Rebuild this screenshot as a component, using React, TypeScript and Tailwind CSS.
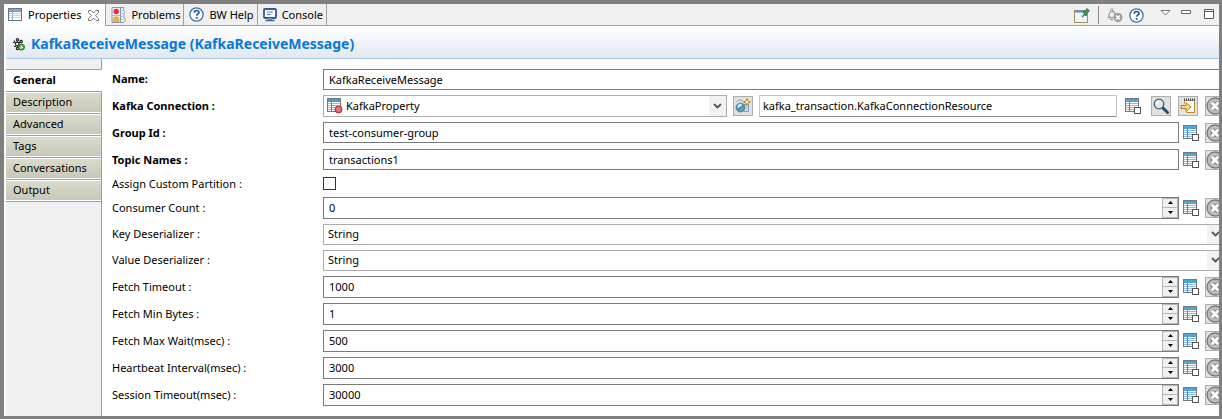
import { useState } from 'react';
import type { ReactNode } from 'react';

const sections = ['General', 'Description', 'Advanced', 'Tags', 'Conversations', 'Output'];

function TableIcon() {
  return (
    <svg width="16" height="16" viewBox="0 0 16 16" className="shrink-0" shapeRendering="crispEdges">
      <rect x="0.5" y="0.5" width="13" height="13" fill="#fff" stroke="#6f7a86" />
      <rect x="1" y="1" width="12" height="3" fill="#4fa3dc" />
      <path d="M1 5.5h12M1 7.5h12M1 9.5h12M1 11.5h12" stroke="#8fbcdc" />
      <path d="M4.5 4v9" stroke="#6f7a86" />
      <rect x="9.5" y="9.5" width="6" height="6" fill="#fff" stroke="#555" />
    </svg>
  );
}

function PropertiesIcon() {
  return (
    <svg width="15" height="14" viewBox="0 0 15 14" className="shrink-0" shapeRendering="crispEdges">
      <rect x="0.5" y="0.5" width="13" height="12" fill="#fff" stroke="#64748f" />
      <rect x="1" y="1" width="12" height="2" fill="#8ba5cb" />
      <path d="M1 3.5h12M4.5 1v11" stroke="#8696b0" />
      <path d="M1 5.5h12M1 7.5h12M1 9.5h12" stroke="#c6d3e6" />
    </svg>
  );
}

function ProblemsIcon() {
  return (
    <svg width="15" height="16" viewBox="0 0 15 16" className="shrink-0">
      <path d="M1 .5h12c-2 2 1.500 3 .5 6-.5 2-1.500 3 0 4.500 1 1.500 1 3.500-.5 4.500H1z" fill="#f4efe2" stroke="#8b98ac" />
      <path d="M9.500 1v14" stroke="#6f93c0" />
      <path d="M9.500 3.500h3M9.500 6.500h3M9.500 9.500h3M9.500 12.500h3" stroke="#b4c6dd" />
      <path d="M1 8.500h8" stroke="#b4bbc5" />
      <circle cx="5.200" cy="4.500" r="2.700" fill="#d9343d" />
      <path d="M2.500 14.500V12c0-3 5.400-3 5.400 0v2.500z" fill="#f0b440" stroke="#d99428" strokeWidth=".6" />
    </svg>
  );
}

function HelpIcon() {
  return (
    <svg width="15" height="15" viewBox="0 0 15 15" className="shrink-0" fill="none">
      <circle cx="7.500" cy="7.500" r="6.600" fill="#fff" stroke="#3b76a8" strokeWidth="1.300" />
      <path d="M5.200 5.800c0-3 4.800-3 4.800-.3 0 1.600-2.300 1.500-2.300 3.300" stroke="#225f97" strokeWidth="1.700" />
      <rect x="6.800" y="10" width="1.800" height="1.800" fill="#225f97" />
    </svg>
  );
}

function ConsoleIcon() {
  return (
    <svg width="14" height="14" viewBox="0 0 14 14" className="shrink-0">
      <rect x="1" y="1" width="12" height="9" rx="1" fill="#fff" stroke="#2c5a9e" strokeWidth="1.800" />
      <path d="M4 4h6M4 6.500h4" stroke="#4b76b3" />
      <path d="M5 10h4v2H5z" fill="#7795bd" />
      <path d="M2.500 12.500h9" stroke="#38639f" strokeWidth="1.500" />
    </svg>
  );
}

function CloseIcon() {
  return (
    <svg width="11" height="11" viewBox="0 0 11 11" fill="#fff" stroke="#6d6d6d">
      <path d="M.5.500h2.500l2.500 2.500L8 .5h2.500v2L7.500 5.500l3 3v2H8L5.500 8 3 10.500H.5v-2l3-3-3-3z" strokeWidth=".9" />
    </svg>
  );
}

function KafkaIcon() {
  return (
    <svg width="12" height="13" viewBox="0 0 12 13" className="shrink-0" fill="none">
      <g stroke="#222" strokeWidth="1.200">
        <circle cx="4.500" cy="1.800" r="1.200" />
        <circle cx="4.200" cy="6" r="1.800" />
        <circle cx="4.500" cy="10.500" r="1.200" />
        <circle cx="8.200" cy="3.600" r="1.200" />
        <path d="M4.500 3v1M4.500 8v1.300M6 5l1.300-.7M0 4.500h2M1.500 2.500v2M1 8.500h2" />
      </g>
      <circle cx="8.500" cy="9.200" r="3" fill="#5cae35" stroke="#2c7418" />
      <path d="M7.600 7.500 10.300 9.200 7.600 10.900z" fill="#fff" />
    </svg>
  );
}

function PinIcon() {
  return (
    <svg width="16" height="15" viewBox="0 0 16 15">
      <rect x=".5" y="2.500" width="13" height="12" fill="#eef6fb" stroke="#a39163" />
      <path d="M1 3.500h12" stroke="#4c93d0" strokeWidth="2" />
      <path d="m8 9 3-3" stroke="#555" strokeWidth="1.200" />
      <path d="m9 4 2-1 2-2.500L15.500 3 13 5l-1 3z" fill="#36a14a" stroke="#1b7233" strokeWidth=".8" />
    </svg>
  );
}

function BellOffIcon() {
  return (
    <svg width="16" height="15" viewBox="0 0 16 15" fill="none">
      <circle cx="4.800" cy="2" r="1.300" stroke="#a2a2a2" />
      <path d="M2 9c0-4 .5-5.500 3-5.500S8 5 8 7M.5 9.500h6M3 11.500h3" stroke="#a2a2a2" strokeWidth="1.400" />
      <circle cx="11" cy="9.500" r="4.500" fill="#9a9a9a" />
      <path d="m9 7.500 4 4m0-4-4 4" stroke="#fff" strokeWidth="1.600" />
    </svg>
  );
}

function ClearIcon() {
  return (
    <svg width="18" height="18" viewBox="0 0 18 18" className="shrink-0">
      <circle cx="9" cy="9" r="8" fill="#bdbdbd" stroke="#777" strokeWidth="1.300" />
      <path d="m5.800 5.800 6.400 6.400m0-6.400-6.400 6.400" stroke="#777" strokeWidth="4.600" />
      <path d="m5.800 5.800 6.400 6.400m0-6.400-6.400 6.400" stroke="#fff" strokeWidth="3" />
    </svg>
  );
}

function PropertyIcon() {
  return (
    <svg width="16" height="16" viewBox="0 0 16 16">
      <rect x=".5" y=".5" width="13" height="13" fill="#fff" stroke="#6f7a86" />
      <path d="M1 2.500h12" stroke="#4f9bd0" strokeWidth="3" />
      <path d="M1 5.500h12M1 7.500h12M1 9.500h12M1 11.500h12" stroke="#9cbfd8" />
      <path d="M4.500 4v9" stroke="#6f7a86" />
      <circle cx="11.500" cy="11.500" r="3.500" fill="#d4595c" stroke="#a43338" />
      <circle cx="11.500" cy="11.500" r="1.500" fill="none" stroke="#efa3a3" />
    </svg>
  );
}

function NewResourceIcon() {
  return (
    <svg width="16" height="16" viewBox="0 0 16 16" fill="none">
      <path d="M1.500 4c2-3 5-2 7-1" stroke="#999" />
      <path d="M8.500 6.500h5v7h-5z" fill="#c4d6f2" stroke="#7d9ccb" />
      <circle cx="5.500" cy="9.500" r="4.500" fill="#4d92bb" stroke="#6a8295" />
      <path d="M2.500 7.500c2-2.500 4-2 4.500-.5s-2 1-3 2.500-1.500 0-1.500-2z" fill="#cdeaf1" />
      <path d="M5 12.500c0-2 3-3 3.500-2s-1.500 3-3.500 2z" fill="#6ab06c" />
      <path d="m12 .5 1 2.500 2.500 1-2.500 1-1 2.500L11 5 8.500 4 11 3z" fill="#fff3b5" stroke="#bd8a27" />
    </svg>
  );
}

function SearchIcon() {
  return (
    <svg width="16" height="16" viewBox="0 0 16 16">
      <path d="m10 10 4.500 4.500" stroke="#1d4d75" strokeWidth="3" strokeLinecap="round" />
      <circle cx="6" cy="6" r="4.800" fill="#dcebf0" stroke="#4c5c68" strokeWidth="1.300" />
      <path d="M3.500 6c0-1.500 1-2.500 2.500-2.500" stroke="#fff" fill="none" strokeWidth="1.300" />
    </svg>
  );
}

function GoToIcon() {
  return (
    <svg width="16" height="16" viewBox="0 0 16 16">
      <path d="M4.500 2.500h10v12h-8" fill="#fff" stroke="#b88a2c" />
      <path d="M4.500 2.500v3" stroke="#b88a2c" />
      <path d="M4 1.500h11" stroke="#333f66" strokeWidth="2" strokeDasharray="1 1" />
      <path d="M1 7.500h5V4.500L11 9l-5 4.500v-3H1z" fill="#fbdc7b" stroke="#b57a17" />
    </svg>
  );
}

function IconButton({ label, children }: { label: string; children: ReactNode }) {
  return (
    <button
      aria-label={label}
      className="flex size-5 shrink-0 items-center justify-center border border-[#adadad] bg-[#e1e1e1]"
    >
      {children}
    </button>
  );
}

function Chevron() {
  return (
    <span className="pointer-events-none absolute inset-y-px right-px flex w-[17px] items-center justify-center bg-[#f2f2f2]">
      <svg width="9" height="6" viewBox="0 0 9 6" fill="none" stroke="#555" strokeWidth="1.800">
        <path d="m1 1 3.500 3.500L8 1" />
      </svg>
    </span>
  );
}

// trailing "use module property" icon and clear button
function FieldActions() {
  return (
    <>
      <span className="ml-1">
        <TableIcon />
      </span>
      <span className="ml-1.5 flex">
        <IconButton label="Clear">
          <ClearIcon />
        </IconButton>
      </span>
    </>
  );
}

function Row({ id, label, bold, height = 'h-[27px]', children }: {
  id: string;
  label: string;
  bold?: boolean;
  height?: string;
  children: ReactNode;
}) {
  return (
    <div className={`flex items-center ${height}`}>
      <label htmlFor={id} className={`w-[211px] shrink-0 whitespace-nowrap ${bold ? 'font-bold' : ''}`}>
        {label}
      </label>
      {children}
    </div>
  );
}

function TextRow({ id, label, value }: { id: string; label: string; value: string }) {
  return (
    <Row id={id} label={label} bold>
      <input id={id} defaultValue={value} className="h-[21px] min-w-0 flex-1 border border-[#7a7a7a] bg-white px-[5px]" />
      <FieldActions />
    </Row>
  );
}

function SpinnerRow({ id, label, initial }: { id: string; label: string; initial: number }) {
  const [value, setValue] = useState(initial);

  return (
    <Row id={id} label={label}>
      <div className="flex h-[22px] min-w-0 flex-1 border border-[#7a7a7a] bg-white">
        <input
          id={id}
          value={value}
          onChange={(e) => setValue(Number(e.target.value) || 0)}
          className="min-w-0 flex-1 px-[5px] outline-none"
        />
        <div className="flex w-4 flex-col border border-[#b5b5b5] bg-[#b5b5b5]">
          <button
            aria-label={`Increase ${label}`}
            onClick={() => setValue(value + 1)}
            className="flex flex-1 items-center justify-center border-b border-[#b5b5b5] bg-[#f0f0f0]"
          >
            <svg width="5" height="3" viewBox="0 0 5 3"><path d="M0 3 2.500 0 5 3z" /></svg>
          </button>
          <button
            aria-label={`Decrease ${label}`}
            onClick={() => setValue(Math.max(0, value - 1))}
            className="flex flex-1 items-center justify-center bg-[#f0f0f0]"
          >
            <svg width="5" height="3" viewBox="0 0 5 3"><path d="M0 0h5L2.500 3z" /></svg>
          </button>
        </div>
      </div>
      <FieldActions />
    </Row>
  );
}

function SelectRow({ id, label }: { id: string; label: string }) {
  return (
    <Row id={id} label={label} height="h-[26px]">
      <div className="relative flex min-w-0 flex-1">
        <select id={id} className="h-[21px] w-full appearance-none border border-[#adadad] bg-white px-1">
          <option>String</option>
          <option>Integer</option>
          <option>ByteArray</option>
        </select>
        <Chevron />
      </div>
    </Row>
  );
}

function ViewTab({ active, icon, label, children }: {
  active?: boolean;
  icon: ReactNode;
  label: string;
  children?: ReactNode;
}) {
  return (
    <div className={`flex items-center border-r border-[#a0a0a0] ${active ? 'bg-white pr-1.5 pl-1' : '-mb-px h-[22px] border-b pr-[3px] pl-[5px]'}`}>
      <button className="flex items-center gap-[5px] whitespace-nowrap">
        {icon}
        {label}
      </button>
      {children}
    </div>
  );
}

function TabBar() {
  return (
    <div className="flex h-[22px] bg-[#f0f0f0] shadow-[inset_0_-1px_0_#a0a0a0]">
      <ViewTab active icon={<PropertiesIcon />} label="Properties">
        <button aria-label="Close Properties" className="ml-[7px]">
          <CloseIcon />
        </button>
      </ViewTab>
      <ViewTab icon={<ProblemsIcon />} label="Problems" />
      <ViewTab icon={<HelpIcon />} label="BW Help" />
      <ViewTab icon={<ConsoleIcon />} label="Console" />
      <div className="ml-auto flex items-center pr-[5px]">
        <button aria-label="Pin view"><PinIcon /></button>
        <span className="mx-2 h-[18px] w-px bg-[#8d8d8d]" />
        <button aria-label="Mute"><BellOffIcon /></button>
        <button aria-label="Help" className="ml-1.5"><HelpIcon /></button>
        <button aria-label="View menu" className="mb-1 ml-4">
          <svg width="11" height="6" viewBox="0 0 11 6" fill="#fff" stroke="#777"><path d="M1 .5h9L5.500 5z" /></svg>
        </button>
        <button aria-label="Minimize" className="mb-1.5 ml-[10px]">
          <svg width="10" height="4" viewBox="0 0 10 4" fill="#fff" stroke="#666"><path d="M.5.500h9v3h-9z" /></svg>
        </button>
        <button aria-label="Maximize" className="mb-0.5 ml-[13px]">
          <svg width="10" height="10" viewBox="0 0 10 10" fill="#fff" stroke="#555"><path d="M.5.500h9v9h-9zM.5 2.500h9" /></svg>
        </button>
      </div>
    </div>
  );
}

function Sidebar({ current, onSelect }: { current: string; onSelect: (s: string) => void }) {
  return (
    <nav className="flex w-24 shrink-0 flex-col bg-[#f0f0f0]">
      <div className="h-[11px] border-r border-b border-[#a0a0a0]" />
      {sections.map((s) => (
        <button
          key={s}
          onClick={() => onSelect(s)}
          className={`h-[22px] border-b border-[#a0a0a0] pb-0.5 pl-[7px] text-left ${
            s === current
              ? 'bg-white font-bold'
              : 'border-r bg-linear-to-b from-[#dcdccd] to-[#c6c7b8] shadow-[inset_0_1px_0_#fff,inset_0_-1px_0_#fff]'
          }`}
        >
          {s}
        </button>
      ))}
      <div className="flex-1 border-r border-[#a0a0a0]" />
    </nav>
  );
}

export default function App() {
  const [section, setSection] = useState('General');

  return (
    <div className="flex min-h-screen flex-col border-4 border-r-[3px] border-b-[3px] border-[#808080] bg-white font-['Noto_Sans','Open_Sans',sans-serif] text-[11px] leading-4 text-black">
      <TabBar />
      <header className="ml-0.5 flex h-[33px] items-center gap-1.5 border-b border-[#a9c5e6] bg-linear-to-b from-white to-[#e1e8f3] pt-1 pl-[7px]">
        <KafkaIcon />
        <h1 className="text-[14px] font-bold whitespace-nowrap text-[#0a78d6]">
          KafkaReceiveMessage (KafkaReceiveMessage)
        </h1>
      </header>

      <div className="ml-0.5 flex flex-1">
        <Sidebar current={section} onSelect={setSection} />

        <main className="min-w-0 flex-1 overflow-hidden pt-[7px] pb-2 pl-[10px]">
          <div className="-mr-1.5">
            <Row id="name" label="Name:" bold height="h-[26px]">
              <input
                id="name"
                defaultValue="KafkaReceiveMessage"
                className="h-[21px] min-w-0 flex-1 border border-[#7a7a7a] bg-white px-[5px]"
              />
            </Row>

            <Row id="connection" label="Kafka Connection :" bold>
              <div className="relative flex min-w-0 flex-[404]">
                <select id="connection" className="h-[22px] w-full appearance-none border border-[#adadad] bg-white pl-[22px]">
                  <option>KafkaProperty</option>
                </select>
                <span className="pointer-events-none absolute inset-y-0 left-1 flex items-center">
                  <PropertyIcon />
                </span>
                <Chevron />
              </div>
              <span className="mx-1.5 flex">
                <IconButton label="New resource"><NewResourceIcon /></IconButton>
              </span>
              <div className="flex min-w-0 flex-[358]">
                <input
                  readOnly
                  aria-label="Resource name"
                  value="kafka_transaction.KafkaConnectionResource"
                  className="h-[22px] w-full border border-[#c4c4c4] border-b-[#8f8f8f] bg-white px-[3px]"
                />
              </div>
              <span className="ml-2"><TableIcon /></span>
              <span className="ml-[10px] flex gap-[7px]">
                <IconButton label="Browse"><SearchIcon /></IconButton>
                <IconButton label="Go to resource"><GoToIcon /></IconButton>
                <IconButton label="Clear"><ClearIcon /></IconButton>
              </span>
            </Row>

            <TextRow id="group" label="Group Id :" value="test-consumer-group" />
            <TextRow id="topics" label="Topic Names :" value="transactions1" />

            <Row id="partition" label="Assign Custom Partition :" height="h-[21px]">
              <input id="partition" type="checkbox" className="size-[13px] appearance-none border border-[#333] bg-white checked:bg-[#333]" />
            </Row>

            <SpinnerRow id="count" label="Consumer Count :" initial={0} />
            <SelectRow id="key" label="Key Deserializer :" />
            <SelectRow id="value" label="Value Deserializer :" />
            <SpinnerRow id="timeout" label="Fetch Timeout :" initial={1000} />
            <SpinnerRow id="min-bytes" label="Fetch Min Bytes :" initial={1} />
            <SpinnerRow id="max-wait" label="Fetch Max Wait(msec) :" initial={500} />
            <SpinnerRow id="heartbeat" label="Heartbeat Interval(msec) :" initial={3000} />
            <SpinnerRow id="session" label="Session Timeout(msec) :" initial={30000} />
          </div>
        </main>
      </div>
    </div>
  );
}
